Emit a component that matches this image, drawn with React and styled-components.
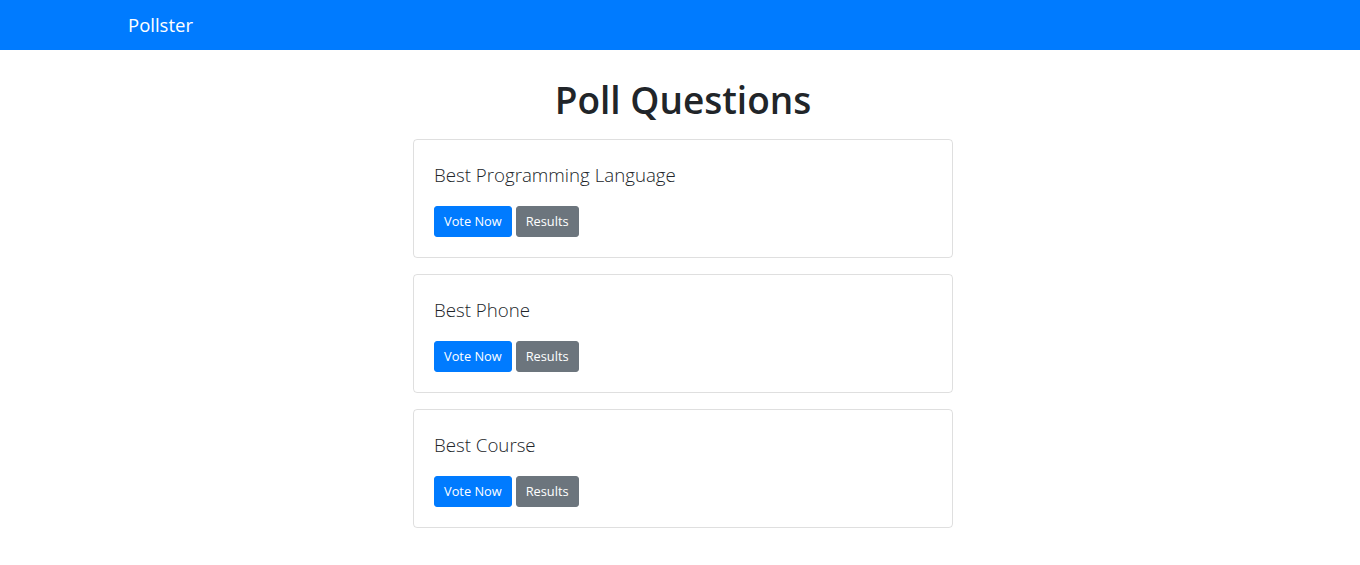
import React from 'react';
import styled, { createGlobalStyle } from 'styled-components';

const GlobalStyle = createGlobalStyle`
  * { box-sizing: border-box; }
  body {
    margin: 0;
    background: #fff;
    color: #212529;
    font-family: "Open Sans", "Noto Sans", "Liberation Sans", sans-serif;
    font-size: 16px;
    line-height: 1.5;
  }
`

const Navbar = styled.nav`
  background-color: #007bff;
  height: 50px;
  display: flex;
  align-items: center;
`

const NavContainer = styled.div`
  width: 1140px;
  margin-left: 113px;
  padding: 0 15px;
`

const Brand = styled.a`
  color: #fff;
  font-size: 18.5px;
  line-height: 1.5;
  text-decoration: none;
`

const Main = styled.main`
  display: flex;
  flex-direction: column;
  align-items: center;
  padding-left: 6px;
`

const Title = styled.h1`
  margin: 28px 0 17px;
  font-size: 37px;
  font-weight: 600;
  line-height: 1.2;
`

const Card = styled.div`
  width: 540px;
  border: 1px solid rgba(0, 0, 0, 0.125);
  border-radius: 4px;
  padding: 20px;
  margin-bottom: 16px;
`

const Question = styled.p`
  margin: 0 0 16px;
  font-size: 18.7px;
  font-weight: 300;
  line-height: 30px;
`

const Buttons = styled.div`
  display: flex;
  gap: 4px;
`

const Btn = styled.a`
  display: inline-block;
  padding: 4px 9px;
  font-size: 12.8px;
  line-height: 21px;
  border-radius: 3px;
  color: #fff;
  text-decoration: none;
  background-color: ${props => props.variant === 'secondary' ? '#6c757d' : '#007bff'};
  border: 1px solid ${props => props.variant === 'secondary' ? '#6c757d' : '#007bff'};
`

const polls = ['Best Programming Language', 'Best Phone', 'Best Course']

export default function App() {
    return (
        <>
            <GlobalStyle />
            <Navbar>
                <NavContainer>
                    <Brand href="#">Pollster</Brand>
                </NavContainer>
            </Navbar>
            <Main>
                <Title>Poll Questions</Title>
                {polls.map(q => (
                    <Card key={q}>
                        <Question>{q}</Question>
                        <Buttons>
                            <Btn href="#">Vote Now</Btn>
                            <Btn href="#" variant="secondary">Results</Btn>
                        </Buttons>
                    </Card>
                ))}
            </Main>
        </>
    )
}
